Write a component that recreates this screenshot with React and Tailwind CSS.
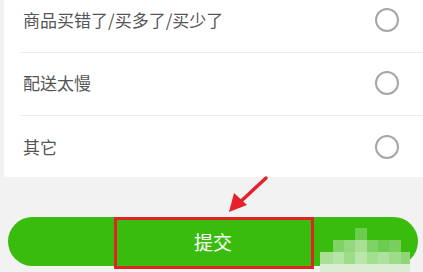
import React from "react";

const items = ["商品买错了/买多了/买少了", "配送太慢", "其它"];

const mosaic = [
  [355, 228, 12, 12, "#6ccc4e"],
  [333, 240, 11, 12, "#7fd266"],
  [344, 240, 11, 12, "#92d97c"],
  [355, 240, 12, 12, "#a7e094"],
  [367, 240, 11, 12, "#7fd266"],
  [378, 240, 11, 12, "#6ccc4e"],
  [389, 240, 12, 12, "#78cf5d"],
  [320, 252, 13, 12, "#a9df97"],
  [333, 252, 11, 12, "#b5e4a6"],
  [344, 252, 11, 12, "#9edc89"],
  [355, 252, 12, 12, "#b9e6ab"],
  [367, 252, 11, 12, "#a4de90"],
  [378, 252, 11, 12, "#aee1a0"],
  [389, 252, 12, 12, "#9fdb8b"],
  [401, 252, 9, 12, "#8fd679"],
  [320, 264, 90, 8, "#d9eed3"],
];

export default function App() {
  return (
    <div
      className="relative w-[423px] h-[272px] overflow-hidden bg-[#f2f2f2]"
      style={{ fontFamily: '"Noto Sans CJK SC", "Noto Sans", sans-serif' }}
    >
      <div className="-mt-[10px] ml-[4px] bg-white flex flex-col rounded-bl-[4px]">
        <div className="ml-[17px] h-[63px] flex items-center justify-between pr-[24px] pb-[3px] border-b border-[#eeeeee]">
          <span className="ml-[2px] text-[17px] text-[#555555] leading-none">{items[0]}</span>
          <span className="w-[24px] h-[24px] rounded-full border-[2px] border-[#a6a6a6]" />
        </div>
        <div className="ml-[17px] h-[63px] flex items-center justify-between pr-[24px] pb-[3px] border-b border-[#eeeeee]">
          <span className="ml-[2px] text-[17px] text-[#555555] leading-none">{items[1]}</span>
          <span className="w-[24px] h-[24px] rounded-full border-[2px] border-[#a6a6a6]" />
        </div>
        <div className="ml-[17px] h-[61px] flex items-center justify-between pr-[24px]">
          <span className="ml-[2px] text-[17px] text-[#555555] leading-none">{items[2]}</span>
          <span className="w-[24px] h-[24px] rounded-full border-[2px] border-[#a6a6a6]" />
        </div>
      </div>
      <div className="mt-[40px] ml-[8px] mr-[5px] h-[49px] rounded-full bg-[#3abc0e] flex items-center justify-center">
        <span className="text-white text-[19px] leading-none">提交</span>
      </div>
      <div className="absolute left-[114px] top-[217px] w-[200px] h-[52px] border-[3px] border-[#e02424]" />
      <svg className="absolute left-0 top-0" width="423" height="272">
        <line x1="266" y1="178" x2="238" y2="204" stroke="#e5212b" strokeWidth="3.5" strokeLinecap="round" />
        <polygon points="229,212 234,193 247,205" fill="#e5212b" />
      </svg>
      {mosaic.map(([x, y, w, h, c], i) => (
        <div
          key={i}
          className="absolute"
          style={{ left: x, top: y, width: w, height: h, background: c }}
        />
      ))}
    </div>
  );
}
